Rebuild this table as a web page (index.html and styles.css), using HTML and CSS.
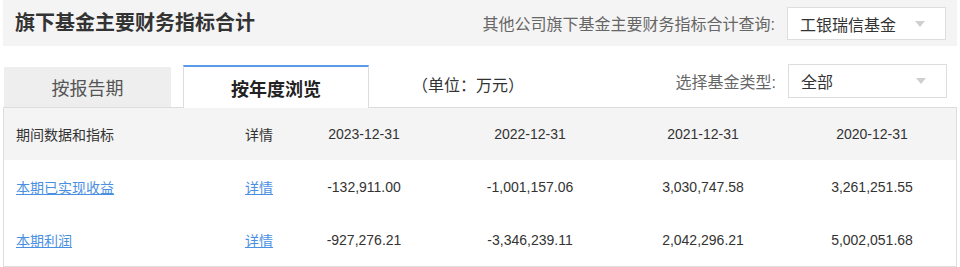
FILE: index.html
```html
<!DOCTYPE html>
<html lang="zh-CN">
<head>
<meta charset="utf-8">
<title>旗下基金主要财务指标合计</title>
<link rel="stylesheet" href="styles.css">
</head>
<body>
<div class="page">
  <div class="topbar">
    <h1 class="title">旗下基金主要财务指标合计</h1>
    <div class="query">
      <span class="label">其他公司旗下基金主要财务指标合计查询:</span>
      <div class="select select-top">
        <span>工银瑞信基金</span>
        <svg class="arrow" width="10" height="6" viewBox="0 0 10 6"><path d="M0 0H10L5 6Z" fill="#cfcfcf"/></svg>
      </div>
    </div>
  </div>

  <div class="tabrow">
    <div class="tab tab-off">按报告期</div>
    <div class="tab tab-on">按年度浏览</div>
    <div class="unit">（单位：万元）</div>
    <div class="typepick">
      <span class="label">选择基金类型:</span>
      <div class="select">
        <span>全部</span>
        <svg class="arrow" width="10" height="6" viewBox="0 0 10 6"><path d="M0 0H10L5 6Z" fill="#cfcfcf"/></svg>
      </div>
    </div>
  </div>

  <div class="table">
    <div class="row head">
      <div class="c1">期间数据和指标</div>
      <div class="c2">详情</div>
      <div class="cn">2023-12-31</div>
      <div class="cn">2022-12-31</div>
      <div class="cn">2021-12-31</div>
      <div class="cn last">2020-12-31</div>
    </div>
    <div class="row">
      <div class="c1"><a href="#">本期已实现收益</a></div>
      <div class="c2"><a href="#">详情</a></div>
      <div class="cn">-132,911.00</div>
      <div class="cn">-1,001,157.06</div>
      <div class="cn">3,030,747.58</div>
      <div class="cn last">3,261,251.55</div>
    </div>
    <div class="row">
      <div class="c1"><a href="#">本期利润</a></div>
      <div class="c2"><a href="#">详情</a></div>
      <div class="cn">-927,276.21</div>
      <div class="cn">-3,346,239.11</div>
      <div class="cn">2,042,296.21</div>
      <div class="cn last">5,002,051.68</div>
    </div>
  </div>
</div>
</body>
</html>
```

FILE: styles.css
```css
* { box-sizing: border-box; }
html, body { margin: 0; padding: 0; background: #fff; }
body {
  font-family: "Liberation Sans", "Noto Sans CJK SC", sans-serif;
  color: #333;
}
.page { width: 960px; padding: 0 3px; }

.topbar {
  height: 46px;
  background: #f4f4f4;
  display: flex;
  align-items: center;
  justify-content: space-between;
  padding: 0 11px 0 12px;
}
.title {
  margin: 0;
  font-size: 20px;
  font-weight: bold;
  color: #333;
  line-height: 26px;
}
.query, .typepick { display: flex; align-items: center; }
.label { font-size: 16px; color: #666; margin-right: 12px; }
.select {
  width: 159px;
  height: 34px;
  background: #fff;
  border: 1px solid #ddd;
  display: flex;
  align-items: center;
  justify-content: space-between;
  padding: 0 20px 0 12px;
  font-size: 16px;
  color: #333;
}
.select-top { height: 33px; margin-top: 1px; }
.arrow { display: block; }

.tabrow {
  margin-top: 19px;
  height: 42px;
  display: flex;
  align-items: flex-end;
  position: relative;
  z-index: 1;
}
.tab {
  font-size: 18px;
  display: flex;
  align-items: center;
  justify-content: center;
}
.tab-off {
  margin-left: 1px;
  width: 167px;
  height: 40px;
  background: #eeeeee;
  color: #555;
}
.tab-on {
  margin-left: 12px;
  width: 186px;
  height: 43px;
  margin-bottom: -1px;
  background: #fff;
  border: 1px solid #ddd;
  border-top: 2px solid #5b9cea;
  border-bottom: none;
  font-weight: bold;
  color: #222;
}
.unit {
  align-self: flex-start;
  margin-top: 4px;
  margin-left: 43px;
  line-height: 34px;
  font-size: 16px;
  color: #333;
}
.typepick {
  align-self: flex-start;
  margin-top: -1px;
  margin-left: auto;
  margin-right: 10px;
}

.table { border: 1px solid #ddd; }
.row {
  display: grid;
  grid-template-columns: 228px 49px 166px 166px 180px 1fr;
  height: 53px;
  align-items: center;
  font-size: 14px;
  color: #333;
}
.row.head { background: #f4f4f4; height: 52px; }
.c1 { padding-left: 12px; }
.c2 { padding-left: 13px; }
.cn { text-align: center; }
.cn.last { padding-right: 5px; }
a { color: #4a90e2; text-decoration: underline; }
```
